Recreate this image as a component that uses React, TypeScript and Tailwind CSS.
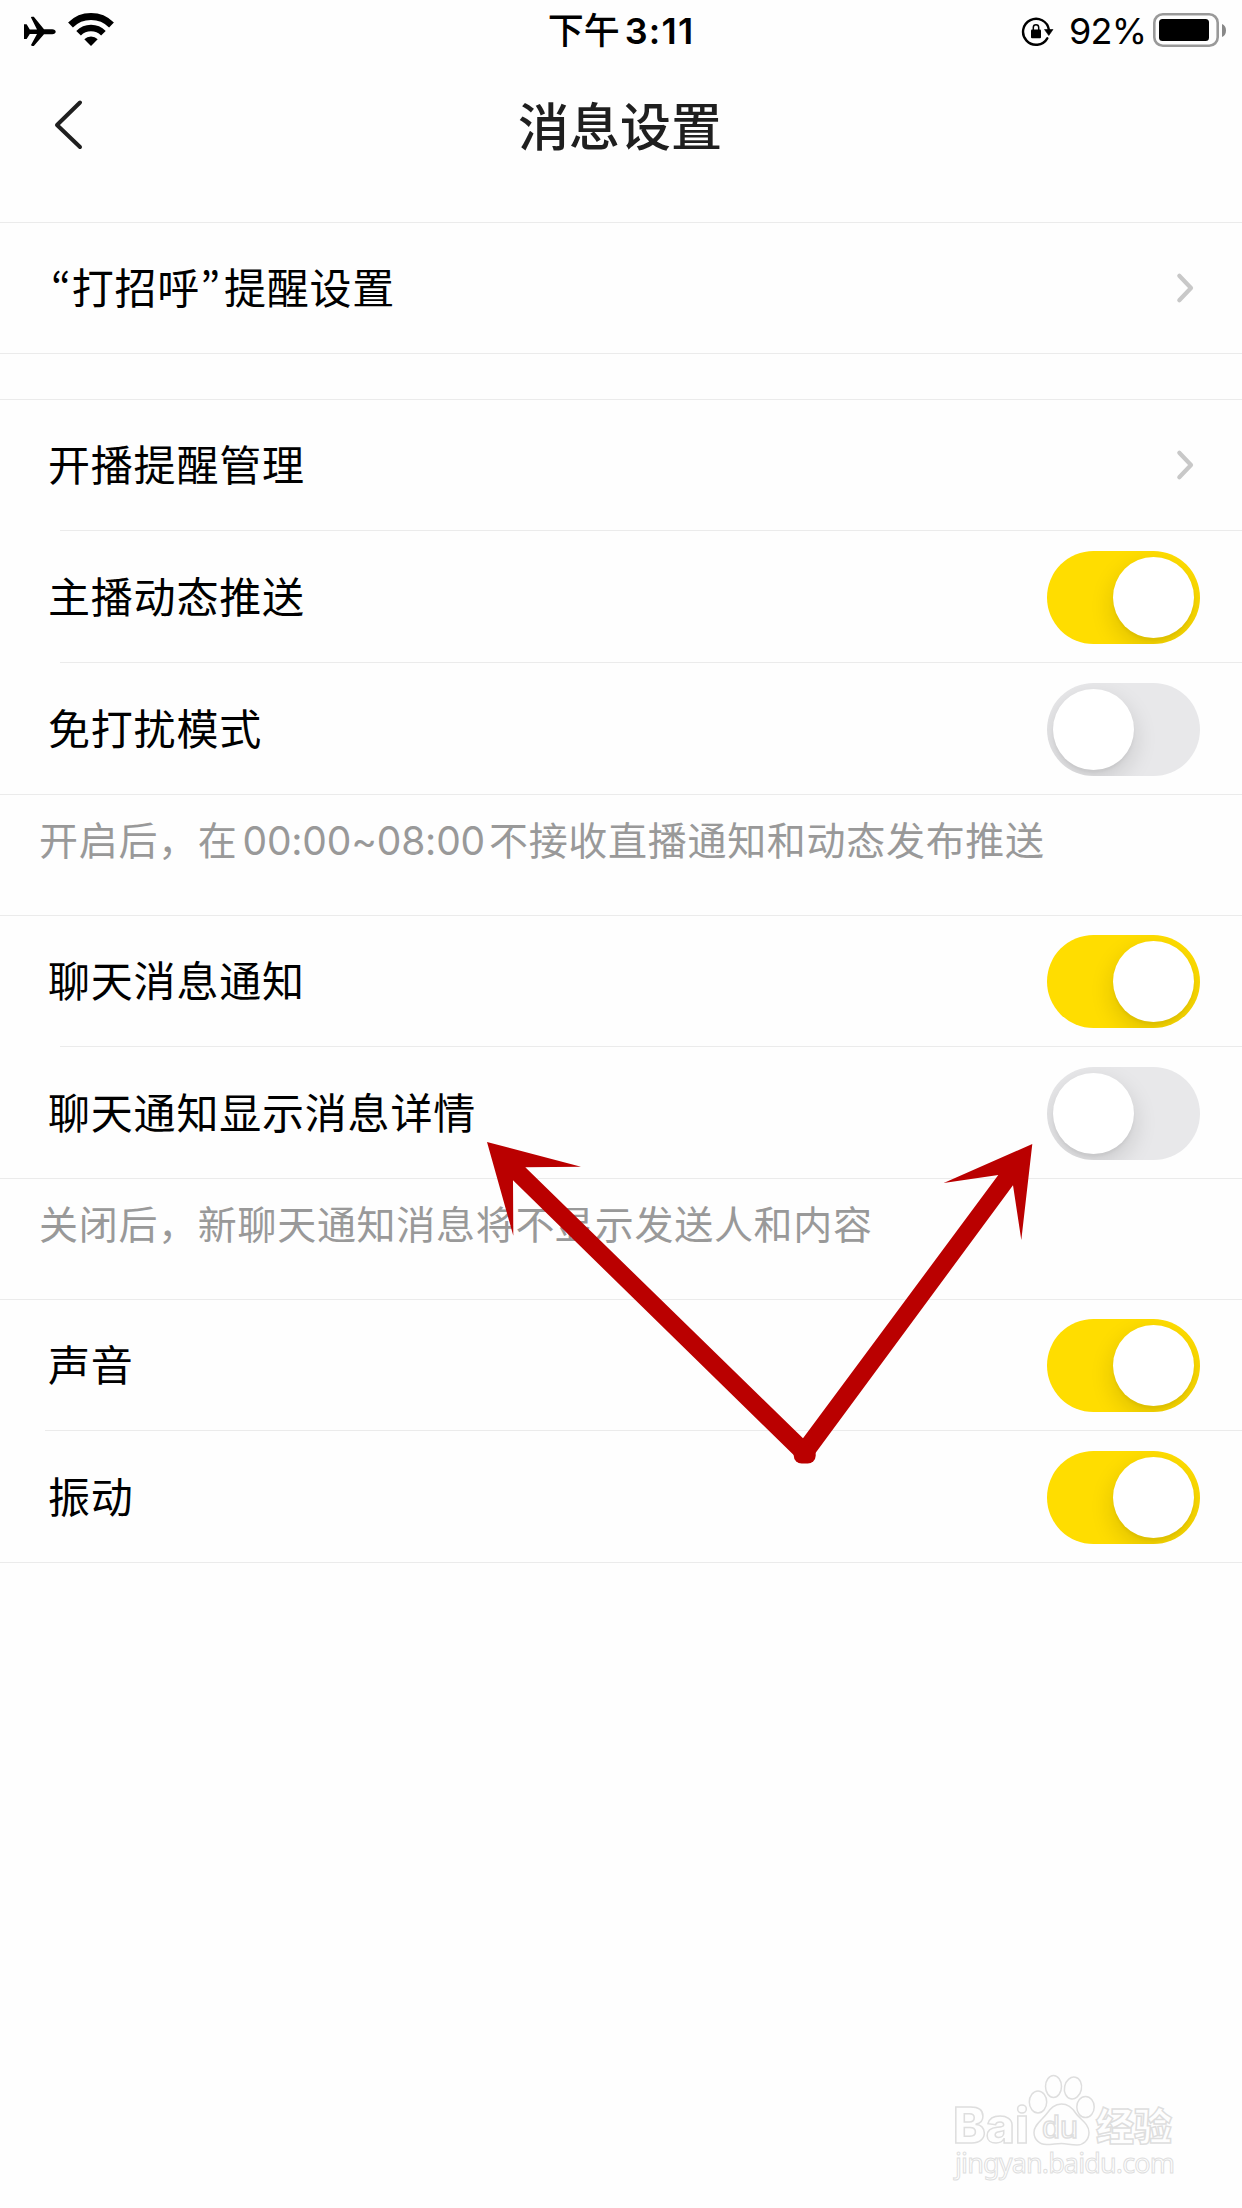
import { useState } from 'react'

type RowProps = {
  label: React.ReactNode
  tall?: boolean
  inset?: string
  children: React.ReactNode
}

function StatusBar() {
  return (
    <div className="grid h-[62px] grid-cols-[1fr_auto_1fr] items-start text-black">
      <svg width="120" height="62" viewBox="0 0 120 62">
        <path d="M24 24.3h2.600l3.200 5.200h7.200L31 17.600c-.3-.8.5-.9 1.300-.9h1.500l10.200 12.600h8.200c2 0 3.500 1 3.500 2.400s-1.500 2.500-3.500 2.500h-8.200L33.800 46h-1.500c-.8 0-1.600-.1-1.300-.9l6-11H29.800L26.600 39H24Z" />
        <path d="M70.500 25a29 29 0 0 1 41 0" fill="none" stroke="#000" strokeWidth="6.800" />
        <path d="M78.600 33.200a17.500 17.500 0 0 1 24.800 0" fill="none" stroke="#000" strokeWidth="6.500" />
        <path d="M84.300 39.300a9.500 9.500 0 0 1 13.400 0L91 46Z" />
      </svg>
      <div className="flex h-[62px] text-[36px] leading-[62px] font-semibold">
        <span className="mr-[5px] font-medium">下午</span>
        <span className="tracking-[1.2px]">3:11</span>
      </div>
      <div className="flex justify-end">
        <svg width="34" height="62" viewBox="1021 0 34 62">
          <path d="M1047.300 38.300a13 13 0 1 1 1.600-8.500" fill="none" stroke="#000" strokeWidth="2.400" strokeLinecap="round" />
          <path d="M1044.500 29.500h8.500l-4.200 6Z" stroke="#000" strokeWidth=".6" strokeLinejoin="round" />
          <rect x="1031" y="29.500" width="10" height="8.700" rx="1" />
          <path d="M1033.300 30v-2.600a2.700 2.700 0 0 1 5.400 0V30" fill="none" stroke="#000" strokeWidth="1.500" />
        </svg>
        <span className="ml-[14px] w-[84px] text-[36px] leading-[62px] tracking-[-0.8px]">92%</span>
        <svg width="89" height="62" viewBox="1153 0 89 62">
          <rect x="1154.300" y="14.300" width="63.400" height="31.400" rx="8.500" fill="none" stroke="#999" strokeWidth="2.600" />
          <rect x="1159" y="19" width="50" height="22" rx="3.500" />
          <path d="M1222 24c2.700 1 4 3.500 4 6.500s-1.300 5.500-4 6.500Z" fill="#888" />
        </svg>
      </div>
    </div>
  )
}

function Row({ label, tall, inset = '', children }: RowProps) {
  return (
    <div className={`flex flex-col ${tall ? 'h-[132px]' : 'h-[131px]'}`}>
      <div className={`h-px shrink-0 bg-[#ebebeb] ${inset}`} />
      <div className={`flex items-start justify-between pl-[48px] ${tall ? 'pt-[20px]' : 'pt-[19px]'}`}>
        <div className="flex text-[42px] leading-[93px] tracking-[0.8px] text-black">{label}</div>
        {children}
      </div>
    </div>
  )
}

function Note({ children }: { children: React.ReactNode }) {
  return (
    <div className="h-[121px] border-t border-[#ebebeb] pl-[39px] text-[39px] leading-[92px] tracking-[0.7px] whitespace-nowrap text-[#999]">
      {children}
    </div>
  )
}

function Toggle({ defaultOn = false }: { defaultOn?: boolean }) {
  const [on, setOn] = useState(defaultOn)

  return (
    <button
      type="button"
      role="switch"
      aria-checked={on}
      onClick={() => setOn(!on)}
      className={`mr-[42px] flex h-[93px] w-[153px] overflow-hidden rounded-full p-[6px] ${
        on ? 'justify-end bg-[#ffdd00]' : 'justify-start bg-[#e8e8ea]'
      }`}
    >
      <span className="size-[81px] rounded-full bg-white shadow-[0_9px_24px_rgba(0,0,0,0.14),0_3px_3px_rgba(0,0,0,0.04)]" />
    </button>
  )
}

function Chevron() {
  return (
    <svg className="mt-[28px] mr-[46px]" width="22" height="36" viewBox="0 0 22 36">
      <path d="M5.300 5.700L17 18 5.300 30.300" fill="none" stroke="#c8c8c8" strokeWidth="4.200" strokeLinecap="round" strokeLinejoin="round" />
    </svg>
  )
}

function Arrows() {
  return (
    <svg className="pointer-events-none absolute top-[1130px] left-[470px]" width="580" height="340" viewBox="470 1130 580 340" fill="#ba0000">
      <path d="M487 1142l94 24.700-55.700.6L803 1438.300 804 1462l-10.300-7L513 1180.300l.3 55.400Z" />
      <path d="M1032.300 1144l-88.600 39 54.600-8L803 1438.300 800 1460l15.700-7.300L1013 1185.300l8.300 54.700Z" />
      <rect x="793.700" y="1445" width="22" height="18.500" rx="8" />
    </svg>
  )
}

function Watermark() {
  return (
    <svg
      className="pointer-events-none absolute top-[2060px] left-[940px]"
      width="250"
      height="130"
      viewBox="940 2060 250 130"
      fill="#fefefe"
      stroke="#dedede"
      strokeWidth="1.500"
    >
      <text x="953" y="2143" fontSize="49" fontWeight="800" textLength="76" lengthAdjust="spacingAndGlyphs" className="font-[Inter]">Bai</text>
      <ellipse cx="1038" cy="2102" rx="8.700" ry="11" />
      <ellipse cx="1053.500" cy="2086.500" rx="8" ry="11" />
      <ellipse cx="1073" cy="2088" rx="8.500" ry="11" transform="rotate(12 1073 2088)" />
      <ellipse cx="1085.500" cy="2107" rx="8.700" ry="10.500" />
      <path d="M1061.500 2104c7 0 11 4 14.500 9.500 4 6 13 10 13 19 0 8-6 12.500-12 12.500-7 0-10-1.500-15.500-1.500s-9 1-15 1c-7 0-12.500-5-12.500-12 0-8 8-12.500 12.500-18.500 4-5.500 8-10 15-10Z" />
      <text x="1042" y="2138" fontSize="31" fontWeight="400" textLength="36" lengthAdjust="spacingAndGlyphs" className="font-['Liberation_Sans']">du</text>
      <text x="1096" y="2140" fontSize="38" fontWeight="900" textLength="76" className="font-['Noto_Sans_CJK_SC']">经验</text>
      <text x="955" y="2173" fontSize="27" fontWeight="400" textLength="220" strokeWidth="1" className="font-['Noto_Sans']">jingyan.baidu.com</text>
    </svg>
  )
}

export default function App() {
  return (
    <div className="relative h-[2208px] w-[1242px] overflow-hidden bg-[#fefefe] font-[Inter,'Noto_Sans_CJK_SC',sans-serif]">
      <StatusBar />
      <header className="grid h-[160px] grid-cols-[1fr_auto_1fr] items-start">
        <svg className="mt-[35px] ml-[50px]" width="40" height="56" viewBox="50 97 40 56">
          <path d="M80 102.500L57 125l23 22" fill="none" stroke="#1f1f1f" strokeWidth="4" strokeLinecap="round" strokeLinejoin="round" />
        </svg>
        <h1 className="pr-[2px] text-[51px] leading-[131px] font-medium text-[#1f1f1f]">消息设置</h1>
      </header>

      <Row
        label={
          <>
            <span className="ml-[3px] font-['Noto_Sans_CJK_SC'] [font-feature-settings:'pwid']">“</span>
            打招呼
            <span className="mr-[3px] font-['Noto_Sans_CJK_SC'] [font-feature-settings:'pwid']">”</span>
            提醒设置
          </>
        }
      >
        <Chevron />
      </Row>
      <div className="h-[46px] border-t border-[#ebebeb]" />

      <Row label="开播提醒管理">
        <Chevron />
      </Row>
      <Row label="主播动态推送" tall inset="ml-[60px]">
        <Toggle defaultOn />
      </Row>
      <Row label="免打扰模式" tall inset="ml-[60px]">
        <Toggle />
      </Row>
      <Note>
        开启后，在<span className="mr-[4px] ml-[5px] tracking-[-0.2px]">00:00~08:00</span>不接收直播通知和动态发布推送
      </Note>

      <Row label="聊天消息通知">
        <Toggle defaultOn />
      </Row>
      <Row label="聊天通知显示消息详情" tall inset="ml-[60px]">
        <Toggle />
      </Row>
      <Note>关闭后，新聊天通知消息将不显示发送人和内容</Note>

      <Row label="声音">
        <Toggle defaultOn />
      </Row>
      <Row label="振动" tall inset="ml-[45px]">
        <Toggle defaultOn />
      </Row>
      <div className="h-px bg-[#ebebeb]" />

      <Arrows />
      <Watermark />
    </div>
  )
}
